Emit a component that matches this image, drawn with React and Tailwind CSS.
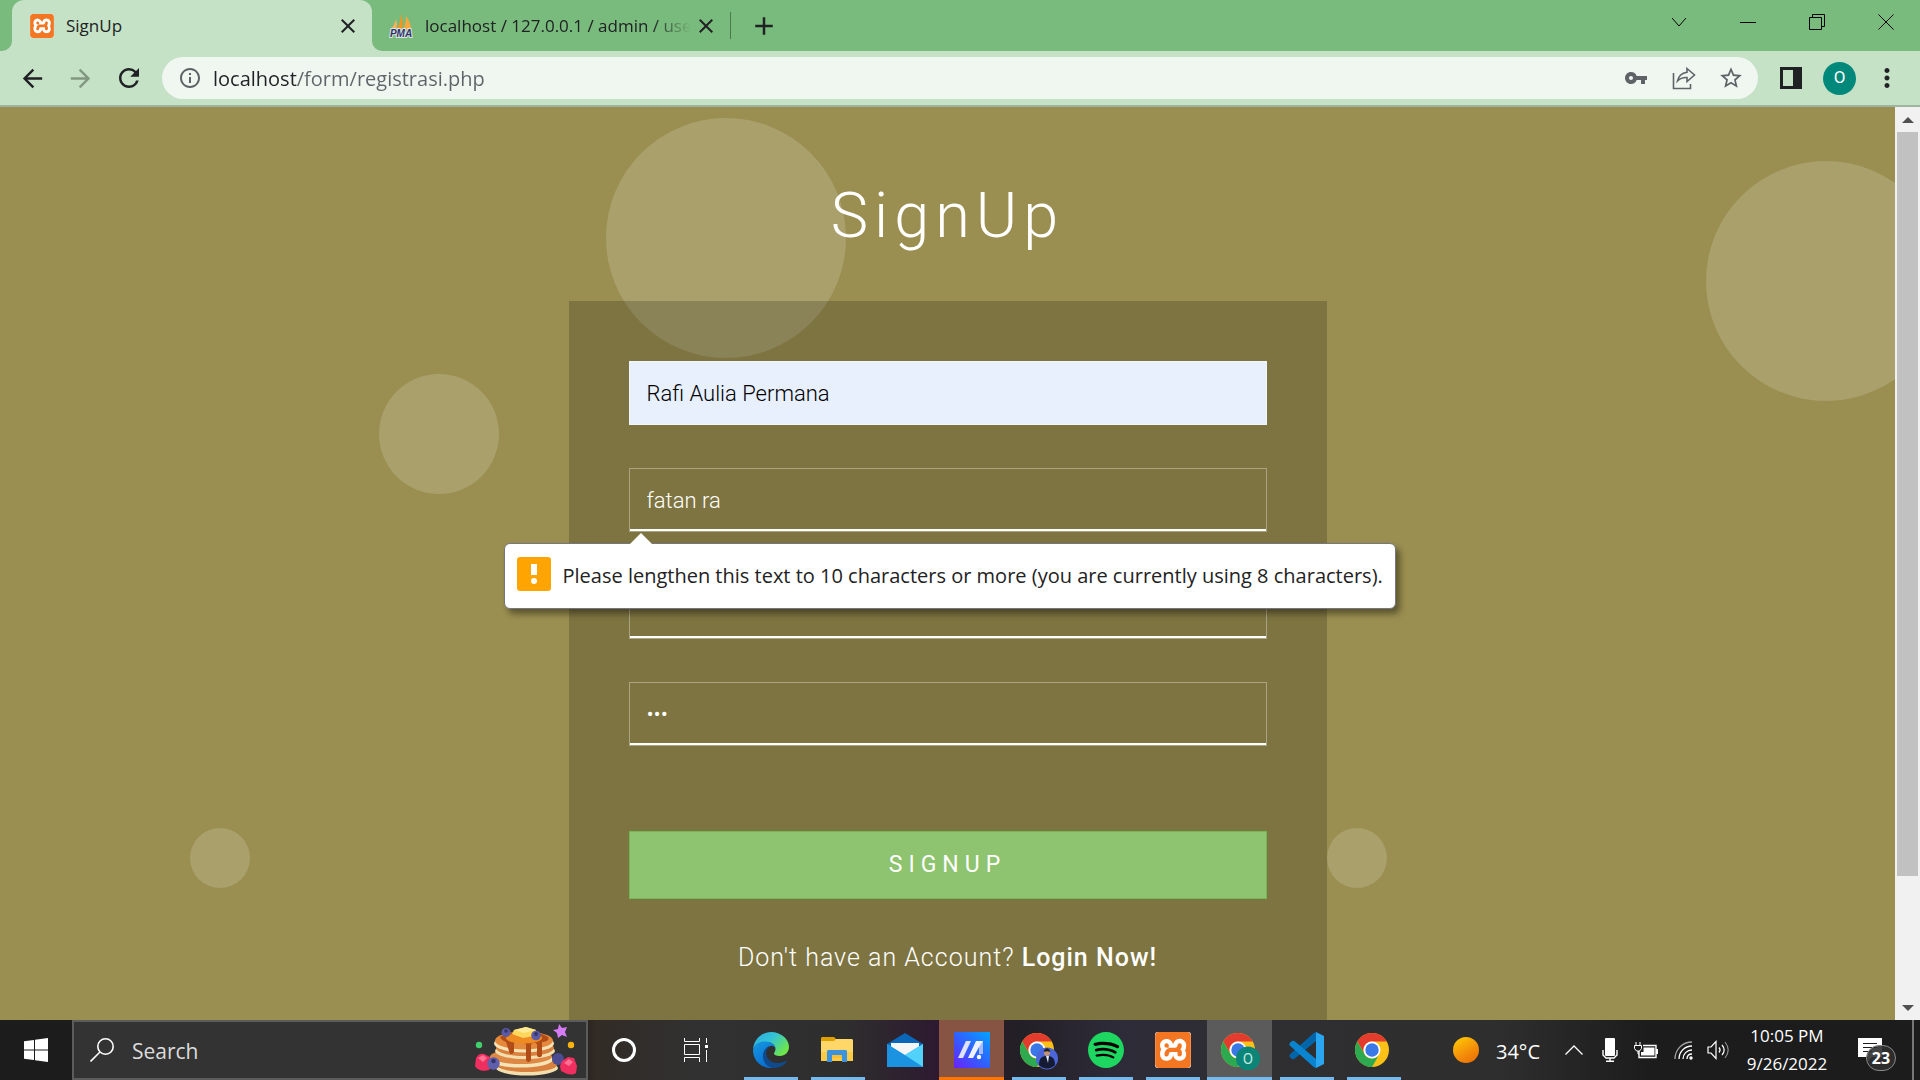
import React from 'react';
import {
  MdAdd,
  MdArrowBack,
  MdArrowForward,
  MdClose,
  MdInfoOutline,
  MdMoreVert,
  MdRefresh,
  MdStarOutline,
  MdVpnKey,
} from 'react-icons/md';
import { SiSpotify, SiXampp } from 'react-icons/si';

/* ---------- logos ---------- */

function XamppLogo({ className }) {
  return (
    <span className={'relative block overflow-hidden rounded-[3px] bg-white ' + className}>
      <SiXampp className="size-full text-[#f37623]" />
    </span>
  );
}

function PmaLogo() {
  return (
    <svg viewBox="0 0 24 24" className="size-6 shrink-0" aria-hidden="true">
      <path d="M7 5c1 4 1 7 .5 11L1 17C4 13 6 9 7 5z" fill="#f9b25a" />
      <path d="M12 0c2 5 2 11 1 16l-6 1c3-5 5-11 5-17z" fill="#f7941d" />
      <path d="M17 2c3 4 5 9 5 13l-8 1c2-4 3-9 3-14z" fill="#fba73b" />
      <text x="12" y="23" textAnchor="middle" fontSize="10" fontWeight="700" fontStyle="italic" fontFamily="Liberation Sans, sans-serif" fill="#32306e" stroke="#d9e6e0" strokeWidth="2" paintOrder="stroke">PMA</text>
    </svg>
  );
}

function ChromeLogo({ children }) {
  return (
    <svg viewBox="0 0 40 40" className="size-10" aria-hidden="true">
      <circle cx="18" cy="20" r="17" fill="#fbc116" />
      <path d="M3.300 11.500A17 17 0 0 1 32.700 11.500H18a8.500 8.500 0 0 0-7.400 12.700z" fill="#e33b2e" />
      <path d="M3.300 11.500 10.600 24.200a8.500 8.500 0 0 0 14.800 0L18 37A17 17 0 0 1 3.300 11.500z" fill="#2da94f" />
      <circle cx="18" cy="20" r="8.500" fill="#fff" />
      <circle cx="18" cy="20" r="6.700" fill="#3b78e7" />
      {children}
    </svg>
  );
}

function EdgeLogo() {
  return (
    <svg viewBox="0 0 36 36" className="size-9" aria-hidden="true">
      <defs>
        <linearGradient id="edgeTop" x1="0" y1="0" x2="1" y2="0.600">
          <stop offset="0" stopColor="#2aa9e0" />
          <stop offset="0.500" stopColor="#34c3d6" />
          <stop offset="1" stopColor="#6ee64a" />
        </linearGradient>
        <linearGradient id="edgeLeft" x1="0" y1="0" x2="0.600" y2="1">
          <stop offset="0" stopColor="#1597e0" />
          <stop offset="1" stopColor="#0a6cd0" />
        </linearGradient>
      </defs>
      <path d="M0 17C1 7 9 0 18 0c10 0 18 7 18 15 0 5-4 9-9 9-4 0-6-1-6-2.500 0-1 1.500-2 1.500-4.500 0-4-4-7-9-7C7 10 2 13 0 17z" fill="url(#edgeTop)" />
      <path d="M0 18c1-5 6-8.500 12-8.500 6 0 10 3 10.500 7-1-2-3-3-5-2.500-4 1-7 5-7 10 0 6 4 10.500 10 12C9 37 0 29 0 18z" fill="url(#edgeLeft)" />
      <path d="M17 14c-4 3-5 8-2 12.500 3.500 5 11 6 17.500 2.500.8-.5 1.500.2 1 1C30.500 34 25.500 36.500 20 36c-6-1-10-6-10-12 0-5 3-9 7-10z" fill="#114a8b" />
    </svg>
  );
}

function FolderLogo() {
  return (
    <svg viewBox="0 0 33 28" className="h-7 w-[33px]" aria-hidden="true">
      <path d="M1 1h12l2 2v4H0V2z" fill="#dfa102" />
      <path d="M0 5h13l2-2h16l1 1v21H0z" fill="#ffd768" />
      <path d="M0 16h32v9H0z" fill="#fccb45" />
      <path d="M6 26V15l1-1h18l1 1v11h-5v-7H11v7z" fill="#3a93dc" />
      <path d="M11 19h10v3H11z" fill="#f9bf33" />
    </svg>
  );
}

function MailLogo() {
  return (
    <svg viewBox="0 0 36 34" className="h-[34px] w-9" aria-hidden="true">
      <path d="M18 0l18 11v4H0v-4z" fill="#0a66b8" />
      <path d="M4 10h28v14H4z" fill="#f5f5f5" />
      <path d="M0 11l18 11 18-11v23H0z" fill="#2ba8ea" />
      <path d="M18 22 36 11v23z" fill="#50d2fb" />
      <path d="M0 11l36 23H0z" fill="#1c93e0" />
    </svg>
  );
}

function AsusLogo() {
  return (
    <svg viewBox="0 0 36 36" className="size-9" aria-hidden="true">
      <defs>
        <linearGradient id="asusBg" x1="0" y1="1" x2="1" y2="0">
          <stop offset="0" stopColor="#6a22ff" />
          <stop offset="0.500" stopColor="#2f62ff" />
          <stop offset="1" stopColor="#02a3ff" />
        </linearGradient>
      </defs>
      <path d="M0 0h36v36H0z" fill="url(#asusBg)" />
      <path d="M12 9h5L9 26H4z" fill="#dfe3ff" />
      <path d="M22 9h7v11h-4v-5l-6 11h-5z" fill="#eef1ff" />
      <path d="M25 15l4-6v13h-4z" fill="#a9b9ff" />
      <circle cx="25" cy="25" r="2.200" fill="#fff" />
    </svg>
  );
}

function VsCodeLogo() {
  return (
    <svg viewBox="0 0 36 36" className="size-9" aria-hidden="true">
      <path d="M27 0 35 4v28l-8 4z" fill="#2aa5f0" />
      <path d="M27 9v0L5 27.300 3 27l-2.500-2.300v-2L25 .8 27 0z" fill="#0065a9" />
      <path d="M27 27 5 8.700 3 9 .5 11.300v2L25 35.200 27 36z" fill="#0a84cf" />
    </svg>
  );
}

function Pancakes() {
  return (
    <svg viewBox="0 -4 104 54" className="h-[54px] w-[104px]" aria-hidden="true">
      <ellipse cx="53" cy="41" rx="31" ry="7.500" fill="#f3dfae" />
      <ellipse cx="53" cy="38" rx="30" ry="7" fill="#d9823f" />
      <ellipse cx="47" cy="32.500" rx="32" ry="8" fill="#f6e3b6" />
      <ellipse cx="47" cy="29.500" rx="31" ry="7.500" fill="#dd8945" />
      <ellipse cx="51" cy="24" rx="30" ry="8" fill="#f3dfae" />
      <ellipse cx="51" cy="21" rx="29" ry="8" fill="#d9823f" />
      <ellipse cx="50" cy="16.500" rx="30" ry="9" fill="#f6e3b6" />
      <ellipse cx="50" cy="13.500" rx="29" ry="9" fill="#e58a3c" />
      <path d="M26 10c8-6 38-7 48 0 2 3-2 5-6 5v13c0 3-5 3-5 0V18c0-3-5-3-6 0v14c0 4-5 4-5 0V18c0-4-10-5-12-2v8c0 4-5 4-5 0l-3-9c-3-1-5-3-6-5z" fill="#b14c17" />
      <ellipse cx="50" cy="11" rx="18" ry="5.500" fill="#ef8b23" />
      <path d="M40 3l12-3 10 3-2 6-11 2-11-4z" fill="#ffd75a" />
      <path d="M40 3l12-3 10 3-12 3z" fill="#ffe994" />
      <circle cx="32" cy="5.500" r="4.500" fill="#5a5aa5" />
      <circle cx="32" cy="4" r="1.800" fill="#34346f" />
      <circle cx="62" cy="8.500" r="4.800" fill="#5a5aa5" />
      <circle cx="62" cy="7" r="1.900" fill="#34346f" />
      <path d="M2 31c2-4 5-5 8-4l6 3 3 6-4 7c-6 2-12 0-14-4z" fill="#ef2f5f" />
      <path d="M4 31l5-3 4 3-4 4z" fill="#ff7193" />
      <circle cx="84" cy="32" r="6" fill="#4c4c92" />
      <circle cx="19.500" cy="36.500" r="6.200" fill="#5f5fab" />
      <circle cx="19.500" cy="34" r="2.300" fill="#34346f" />
      <path d="M88 34l6-4 6 1 3 8-1 7c-4 3-10 1-15-2l-1-5z" fill="#ef2f5f" />
      <path d="M90 36l5-4 4 3-4 4z" fill="#ff7193" />
      <path d="M85-3l3 4 5-1-2 5 2 5-5-2-4 3-1-5-4-3 5-1z" fill="#d57bf5" />
      <circle cx="5" cy="18" r="3.200" fill="#3fcf6c" />
      <circle cx="97" cy="18" r="3.200" fill="#ffb30f" />
    </svg>
  );
}

/* ---------- browser chrome ---------- */

function TabStrip() {
  return (
    <div className="flex h-[51px] shrink-0 items-stretch bg-[#79bb7c] text-[17px] text-[#202124]">
      <div className="flex w-3 items-end bg-[#c5e1c6]">
        <span className="h-full w-full rounded-br-[10px] bg-[#79bb7c]" />
      </div>
      <div className="flex w-[360px] items-center rounded-t-xl bg-[#c5e1c6] pr-3 pl-[18px]">
        <XamppLogo className="size-6 shrink-0" />
        <span className="ml-3 flex-1">SignUp</span>
        <button aria-label="Close tab SignUp">
          <MdClose className="size-6" />
        </button>
      </div>
      <div className="flex w-3 bg-[#c5e1c6]">
        <span className="h-full w-full rounded-bl-[10px] bg-[#79bb7c]" />
      </div>
      <div className="flex w-[346px] items-center pl-[5px]">
        <PmaLogo />
        <span className="ml-3 w-[266px] overflow-hidden whitespace-nowrap [mask-image:linear-gradient(to_right,black_85%,transparent)]">
          localhost / 127.0.0.1 / admin / use
        </span>
        <button aria-label="Close tab phpMyAdmin" className="ml-[3px]">
          <MdClose className="size-6" />
        </button>
      </div>
      <span className="my-3 w-px bg-[#4b7a4e]" />
      <button aria-label="New tab" className="ml-[18px]">
        <MdAdd className="size-[30px]" />
      </button>
      <div className="ml-auto flex text-black">
        <button aria-label="Search tabs" className="flex w-[69px] items-center justify-center pb-2">
          <svg viewBox="0 0 16 16" className="size-4" fill="none" stroke="currentColor"><path d="M1 4l7 8 7-8" /></svg>
        </button>
        <button aria-label="Minimize" className="flex w-[69px] items-center justify-center pb-2">
          <svg viewBox="0 0 16 16" className="size-4" fill="none" stroke="currentColor"><path d="M0 8.500h16" /></svg>
        </button>
        <button aria-label="Restore" className="flex w-[69px] items-center justify-center pb-2">
          <svg viewBox="0 0 16 16" className="size-4" fill="none" stroke="currentColor"><path d="M.5 3.500h12v12H.5zM3.500 3.500v-3h12v12h-3" /></svg>
        </button>
        <button aria-label="Close" className="flex w-[69px] items-center justify-center pb-2">
          <svg viewBox="0 0 16 16" className="size-4" fill="none" stroke="currentColor"><path d="M.5.5l15 15M15.500.5l-15 15" /></svg>
        </button>
      </div>
    </div>
  );
}

function Toolbar() {
  return (
    <div className="flex h-14 shrink-0 items-center border-b-2 border-[#9eb49f] bg-[#c5e1c6] px-[18px] text-[#202124]">
      <button aria-label="Back"><MdArrowBack className="size-[29px]" /></button>
      <button aria-label="Forward" className="ml-[19px] text-[#82977f]"><MdArrowForward className="size-[29px]" /></button>
      <button aria-label="Reload" className="ml-[19px]"><MdRefresh className="size-[30px]" /></button>
      <div className="ml-[18px] flex h-[42px] flex-1 items-center rounded-full bg-[#f0f7f0] pr-3.5 pl-4 text-[#5f6368]">
        <MdInfoOutline className="size-6 shrink-0" />
        <input
          aria-label="Address"
          defaultValue="localhost/form/registrasi.php"
          className="ml-[11px] h-full min-w-0 flex-1 bg-[linear-gradient(90deg,#202124_84px,#5f6368_84px)] bg-clip-text text-[20px] text-transparent outline-none"
        />
        <button aria-label="Passwords"><MdVpnKey className="size-6" /></button>
        <button aria-label="Share" className="ml-6">
          <svg viewBox="0 0 24 24" className="size-6" fill="none" stroke="currentColor" strokeWidth="1.600">
            <path d="M1.500 7v15.500H18.500V18" />
            <path d="M15 2.500l7.500 6.500-7.500 6.500v-4c-4-.3-7 1-9.500 3.500 1-5 4-8 9.500-8.800z" />
          </svg>
        </button>
        <button aria-label="Bookmark" className="ml-[22px]"><MdStarOutline className="size-[26px]" /></button>
      </div>
      <button aria-label="Side panel" className="ml-[22px]">
        <svg viewBox="0 0 22 22" className="size-[22px]"><path d="M0 0h22v22H0zM3 3v16h10V3z" fill="currentColor" fillRule="evenodd" /></svg>
      </button>
      <button aria-label="Profile" className="ml-[21px] flex size-[33px] items-center justify-center rounded-full bg-[#00897b] font-['Roboto',sans-serif] text-[17px] text-white">O</button>
      <button aria-label="Menu" className="ml-4"><MdMoreVert className="size-[30px]" /></button>
    </div>
  );
}

/* ---------- page ---------- */

const circles = [
  'left-[606px] top-[11px] size-60',
  'left-[379px] top-[267px] size-[120px]',
  'left-[190px] top-[721px] size-[60px]',
  'left-[1327px] top-[721px] size-[60px]',
  'right-[-51px] top-[54px] size-60',
];

const fieldClass =
  'block h-16 w-full border border-white/35 bg-transparent px-[17px] text-[22px] font-light text-white shadow-[inset_0_-2px_0_#fff] outline-none';

function ValidationBubble() {
  return (
    <div role="alert" className="absolute top-[75px] left-[-125px] z-10 flex h-[66px] items-center rounded-md border border-[#77767f] bg-white px-3 font-['Open_Sans',sans-serif] text-[20px] whitespace-nowrap text-[#222] shadow-[4px_5px_6px_rgba(0,0,0,0.4)]">
      <svg viewBox="0 0 24 12" className="absolute top-[-11px] left-[124px] h-3 w-6" aria-hidden="true">
        <path d="M0 12 12 0l12 12z" fill="#fff" />
      </svg>
      <span className="mr-3 mb-1 flex size-[34px] shrink-0 items-center justify-center rounded-[3px] bg-[#ffa400]">
        <svg viewBox="0 0 6 20" className="h-5 w-1.5" aria-hidden="true"><path d="M0 0h6v11H0z" fill="#fff" /><circle cx="3" cy="17" r="3" fill="#fff" /></svg>
      </span>
      Please lengthen this text to 10 characters or more (you are currently using 8 characters).
    </div>
  );
}

function SignUpPage() {
  return (
    <main className="relative flex-1 overflow-hidden bg-[#9a8e50] font-['Roboto',sans-serif] text-white">
      {circles.map((c) => (
        <span key={c} className={'absolute rounded-full bg-[#a9a06b] ' + c} />
      ))}
      <div className="relative">
        <h1 className="pt-[69px] text-center text-[63px] leading-[80px] font-light tracking-[6px]">SignUp</h1>
        <form className="mx-auto mt-[45px] w-2/5 bg-black/18 p-[60px] pb-40" onSubmit={(e) => e.preventDefault()}>
          <div className="flex flex-col gap-[43px]">
            <input aria-label="Name" defaultValue="Rafi Aulia Permana" className="block h-16 w-full border border-white/35 bg-[#e8f0fe] px-[17px] text-[22px] font-light text-black outline-none" />
            <div className="relative">
              <input aria-label="Username" defaultValue="fatan ra" className={fieldClass} />
              <ValidationBubble />
            </div>
            <input aria-label="Email" type="email" className={fieldClass} />
            <input aria-label="Password" type="password" defaultValue="abc" className={fieldClass} />
          </div>
          <button className="mt-[85px] h-[68px] w-full border border-[#74b856] bg-[#8ec370] text-[23px] tracking-[6px]">SIGNUP</button>
          <p className="mt-[43px] text-center text-[25px] leading-8 font-light tracking-[1px]">
            Don't have an Account? <a href="#login" className="font-medium">Login Now!</a>
          </p>
        </form>
      </div>
    </main>
  );
}

function PageScrollbar() {
  return (
    <div className="flex w-[25px] shrink-0 flex-col items-center bg-[#f1f1f1]">
      <button aria-label="Scroll up" className="flex h-[25px] w-full items-center justify-center">
        <svg viewBox="0 0 12 6" className="h-1.5 w-3"><path d="M0 6l6-6 6 6z" fill="#505050" /></svg>
      </button>
      <div className="w-full flex-1 px-0.5"><div className="h-[calc(100%-119px)] bg-[#c1c1c1]" /></div>
      <button aria-label="Scroll down" className="flex h-[25px] w-full items-center justify-center">
        <svg viewBox="0 0 12 6" className="h-1.5 w-3"><path d="M0 0l6 6 6-6z" fill="#505050" /></svg>
      </button>
    </div>
  );
}

/* ---------- taskbar ---------- */

function TaskItem({ label, bar = 'bg-[#76b9ed]', wide = false, tile = '', children }) {
  return (
    <button aria-label={label} className={'mr-0.5 flex h-full w-[65px] flex-col items-center ' + tile}>
      <span className="flex flex-1 items-center justify-center pt-[3px]">{children}</span>
      <span className={'h-[3px] ' + (wide ? 'w-full ' : 'w-[54px] ') + bar} />
    </button>
  );
}

function Taskbar() {
  return (
    <footer className="flex h-[60px] shrink-0 items-stretch bg-[linear-gradient(90deg,#1c1c1c_0%,#1e1e1e_30%,#322b26_31%,#313131_36%,#2e2e2e_44%,#2d1930_49%,#231f26_53%,#2d2b38_58%,#2f2f32_66%,#2e2e2e_78%,#1c1c1c_86%,#1c1c1c_100%)] text-white">
      <button aria-label="Start" className="flex w-[72px] items-center justify-center">
        <svg viewBox="0 0 24 24" className="size-6"><path d="M0 3.300 10 2v9.500H0zM11 1.800 24 0v11.500H11zM0 12.500h10V22L0 20.700zM11 12.500h13V24l-13-1.800z" fill="#fff" /></svg>
      </button>
      <label className="flex w-[516px] items-center border-2 border-[#5c5c5c] bg-[#333] pr-2 pl-4">
        <svg viewBox="0 0 24 24" className="size-6 shrink-0" fill="none" stroke="#fff" strokeWidth="1.600"><circle cx="15.500" cy="8.500" r="7.700" /><path d="M10 14 .5 23.500" /></svg>
        <input aria-label="Search" placeholder="Search" className="ml-[18px] w-40 flex-1 bg-transparent pt-1 text-[21px] text-white outline-none placeholder:text-[#dcdcdc]" />
        <Pancakes />
      </label>
      <button aria-label="Cortana" className="flex w-[72px] items-center justify-center"><span className="size-6 rounded-full border-3 border-white" /></button>
      <button aria-label="Task view" className="mr-[6px] flex w-[72px] items-center justify-center">
        <svg viewBox="0 0 24 24" className="size-6" fill="none" stroke="#fff"><path d="M.5 0v3.500h15V0M.5 6.500h15v10H.5zM.5 24v-4.500h15V24M22.500 0v5M22.500 12v12" /><path d="M21 7h3v3h-3z" fill="#fff" stroke="none" /></svg>
      </button>
      <TaskItem label="Edge"><EdgeLogo /></TaskItem>
      <TaskItem label="File Explorer"><FolderLogo /></TaskItem>
      <TaskItem label="Mail" bar="bg-transparent"><MailLogo /></TaskItem>
      <TaskItem label="MyASUS" wide bar="bg-[#ff7500]" tile="bg-[#875343]"><AsusLogo /></TaskItem>
      <TaskItem label="Chrome, personal">
        <ChromeLogo>
          <circle cx="28" cy="28.500" r="11" fill="#4a66d8" />
          <path d="M20 35c0-7 3-9 8-9s8 2 8 9a11 11 0 0 1-16 0z" fill="#141b33" />
          <path d="M27 26h3l-1 7z" fill="#dfe6f5" />
          <circle cx="28" cy="23" r="3" fill="#c39274" />
          <path d="M25 22c0-5 6-5 6 0-2-1-4-1-6 0z" fill="#222" />
        </ChromeLogo>
      </TaskItem>
      <TaskItem label="Spotify">
        <span className="block size-9 rounded-full bg-[radial-gradient(circle,black_60%,transparent_61%)]"><SiSpotify className="size-full text-[#1ed760]" /></span>
      </TaskItem>
      <TaskItem label="XAMPP"><XamppLogo className="size-9" /></TaskItem>
      <TaskItem label="Chrome, O" wide tile="bg-[#5b5b5b]">
        <ChromeLogo>
          <circle cx="28" cy="28.500" r="12" fill="#0a8577" />
          <text x="28" y="34" textAnchor="middle" fontSize="15" fontFamily="Roboto, sans-serif" fill="#bfe6df">O</text>
        </ChromeLogo>
      </TaskItem>
      <TaskItem label="Visual Studio Code"><VsCodeLogo /></TaskItem>
      <TaskItem label="Chrome"><ChromeLogo /></TaskItem>
      <div className="ml-auto flex items-center">
        <span className="size-[26px] rounded-full bg-[linear-gradient(150deg,#ffd000,#f5900a_55%,#e86a00)]" />
        <span className="ml-[17px] w-[50px] pt-1 text-[20px]">34°C</span>
        <svg viewBox="0 0 18 10" className="ml-[19px] h-2.5 w-[18px]" fill="none" stroke="#fff" strokeWidth="1.300"><path d="M.5 9.500 9 1l8.500 8.500" /></svg>
        <svg viewBox="0 0 16 24" className="ml-[19px] h-6 w-4"><rect x="3" y="0" width="10" height="18" rx="1" fill="#fff" /><path d="M1 12v5l3 3h8l3-3v-5M8 20v3M4 23.300h8" fill="none" stroke="#fff" strokeWidth="1.400" /></svg>
        <svg viewBox="0 0 24 17" className="ml-4 h-[17px] w-6" fill="none" stroke="#fff"><path d="M5 9v6.500h17V3.500H9" strokeWidth="1.400" /><path d="M9.500 5.500h11v8H7V10h2.500zM22 7h2v5h-2z" fill="#fff" stroke="none" /><path d="M2 0v3M6 0v3M.5 3.500h7v3L5.500 9h-3L.5 6.500zM4 9v3h1" /></svg>
        <svg viewBox="0 0 19 19" className="ml-4 size-[19px]" fill="none" stroke="#fff" strokeWidth="1.300"><path d="M1 18C1 9 8 1 18 1" opacity=".6" /><path d="M5 18C5 11 10.500 5 18 5M9 18c0-5 4-9 9-9M13 18c0-3 2-5 5-5" /><circle cx="17" cy="17" r="1.700" fill="#fff" stroke="none" /></svg>
        <svg viewBox="0 0 22 20" className="ml-3.5 h-5 w-[22px]" fill="none" stroke="#fff" strokeWidth="1.200"><path d="M1 7h3l5-5.500v17L4 13H1z" /><path d="M12 7.500c1.300 1.500 1.300 3.500 0 5M15 5c2.600 3 2.600 7 0 10" /><path d="M18 2c4 5 4 11 0 16" opacity=".5" /></svg>
        <div className="ml-[13px] w-[90px] text-center text-[17px] leading-[28px]"><div>10:05 PM</div><div>9/26/2022</div></div>
        <button aria-label="Notifications, 23 new" className="relative ml-[26px] h-[34px] w-[38px]">
          <svg viewBox="0 0 24 24" className="size-6"><path d="M0 0h24v19H14l-4 4v-4H0z" fill="#fff" /><path d="M5 5.500h14M5 9.500h14M5 13.500h9" stroke="#1c1c1c" strokeWidth="1.200" /></svg>
          <span className="absolute top-3 left-2 flex h-[26px] w-[30px] items-center justify-center rounded-full border border-[#8a8a8a] bg-[#303030]/90 text-[16px] font-bold">23</span>
        </button>
        <span className="mr-1.5 ml-4 h-[60px] w-0.5 bg-[#777]" />
      </div>
    </footer>
  );
}

export default function App() {
  return (
    <div className="flex h-screen flex-col overflow-hidden font-['Open_Sans',sans-serif]">
      <TabStrip />
      <Toolbar />
      <div className="flex min-h-0 flex-1">
        <SignUpPage />
        <PageScrollbar />
      </div>
      <Taskbar />
    </div>
  );
}
